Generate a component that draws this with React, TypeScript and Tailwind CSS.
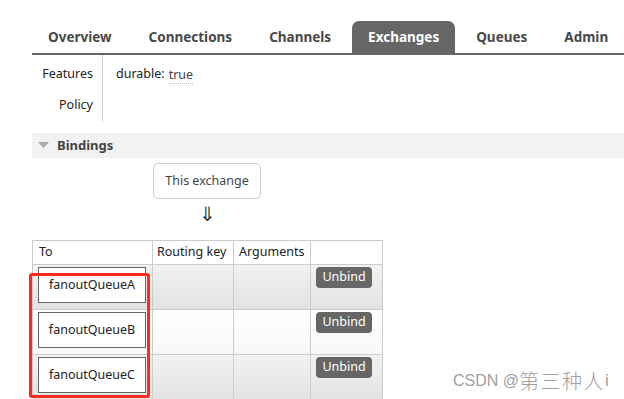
import React from "react";

const font = { fontFamily: '"Noto Sans", "Open Sans", sans-serif' };

function Tab({ label, active }: { label: string; active?: boolean }) {
  return (
    <div
      className={
        "h-[32px] px-[16px] flex items-center text-[13.5px] font-bold rounded-t-[7px] " +
        (active ? "bg-[#666666] text-white" : "text-[#484848]")
      }
    >
      {label}
    </div>
  );
}

function QueueRow({ name, even }: { name: string; even?: boolean }) {
  return (
    <tr
      className={
        "h-[45px] " +
        (even
          ? "bg-gradient-to-b from-[#ffffff] to-[#f8f8f8]"
          : "bg-gradient-to-b from-[#f2f2f2] to-[#e2e2e2]")
      }
    >
      <td className="border border-[#cccccc] align-top pl-[5px] pt-[2px] pr-[5px]">
        <div className="w-[108px] h-[36px] border border-[#666666] bg-white flex items-center justify-center text-[12.5px] text-[#222222]">
          {name}
        </div>
      </td>
      <td className="border border-[#cccccc]"></td>
      <td className="border border-[#cccccc]"></td>
      <td className="border border-[#cccccc] align-top pl-[5px] pt-[2px]">
        <div className="w-[56px] h-[21px] rounded-[4px] bg-[#666666] text-white text-[12.5px] flex items-center justify-center">
          Unbind
        </div>
      </td>
    </tr>
  );
}

export default function App() {
  return (
    <div className="relative w-[624px] h-[399px] bg-white overflow-hidden" style={font}>
      <div className="pl-[32px] pt-[21px]">
        {/* tabs */}
        <div className="flex gap-[5px] border-b-2 border-[#666666]">
          <Tab label="Overview" />
          <Tab label="Connections" />
          <Tab label="Channels" />
          <Tab label="Exchanges" active />
          <Tab label="Queues" />
          <Tab label="Admin" />
        </div>

        {/* features */}
        <div className="flex h-[66px]">
          <div className="w-[71px] border-r border-[#cccccc] flex flex-col items-end pr-[9px] text-[12.5px] text-[#222222]">
            <div className="h-[19px] mt-[9px] leading-[19px]">Features</div>
            <div className="h-[19px] mt-[12px] leading-[19px]">Policy</div>
          </div>
          <div className="pl-[13px] pt-[9px] text-[12.5px] text-[#222222] leading-[19px] flex items-start">
            <span>durable:</span>
            <span className="ml-[4px] mt-[2px] text-[#444444] border-b border-dotted border-[#bbbbbb] leading-[17px]">
              true
            </span>
          </div>
        </div>

        {/* bindings header */}
        <div className="mt-[12px] h-[25px] bg-[#f2f2f2] flex items-center">
          <svg width="11" height="7" viewBox="0 0 11 7" className="ml-[6px]">
            <polygon points="0,0 11,0 5.5,6" fill="#a8a8a8" />
          </svg>
          <span className="ml-[8px] text-[13px] font-bold text-[#444444]">Bindings</span>
        </div>

        {/* this exchange */}
        <div className="ml-[121px] mt-[5px] w-[108px] h-[36px] border border-[#cccccc] rounded-[5px] flex items-center justify-center text-[12.5px] text-[#444444]">
          This exchange
        </div>
        <div className="ml-[121px] w-[108px] text-center text-[20px] leading-[30px] text-[#333333]">⇓</div>

        {/* table */}
        <table className="mt-[11px] border-collapse text-[12.5px] text-[#222222]">
          <thead>
            <tr className="h-[24px] bg-white">
              <th className="w-[120px] border border-[#cccccc] text-left font-normal pl-[6px]">To</th>
              <th className="w-[81px] border border-[#cccccc] text-left font-normal pl-[4px]">Routing key</th>
              <th className="w-[77px] border border-[#cccccc] text-left font-normal pl-[5px]">Arguments</th>
              <th className="w-[72px] border border-[#cccccc]"></th>
            </tr>
          </thead>
          <tbody>
            <QueueRow name="fanoutQueueA" />
            <QueueRow name="fanoutQueueB" even />
            <QueueRow name="fanoutQueueC" />
          </tbody>
        </table>
      </div>

      {/* red annotation box */}
      <div className="absolute left-[29px] top-[273px] w-[121px] h-[125px] border-[3px] border-[#ff2a1f] rounded-[3px]"></div>

      {/* watermark */}
      <div
        className="absolute left-[453px] top-[369px] h-[24px] flex items-center text-[#a0a0a0]"
        style={{ fontFamily: '"Liberation Sans", "Noto Sans CJK SC", sans-serif' }}
      >
        <span className="text-[16px]">CSDN @</span>
        <span
          className="text-[20px] tracking-[1.5px]"
          style={{ fontFamily: '"Noto Sans CJK SC", sans-serif', fontWeight: 300 }}
        >
          第三种人
        </span>
        <span className="text-[17px]">i</span>
      </div>
    </div>
  );
}
